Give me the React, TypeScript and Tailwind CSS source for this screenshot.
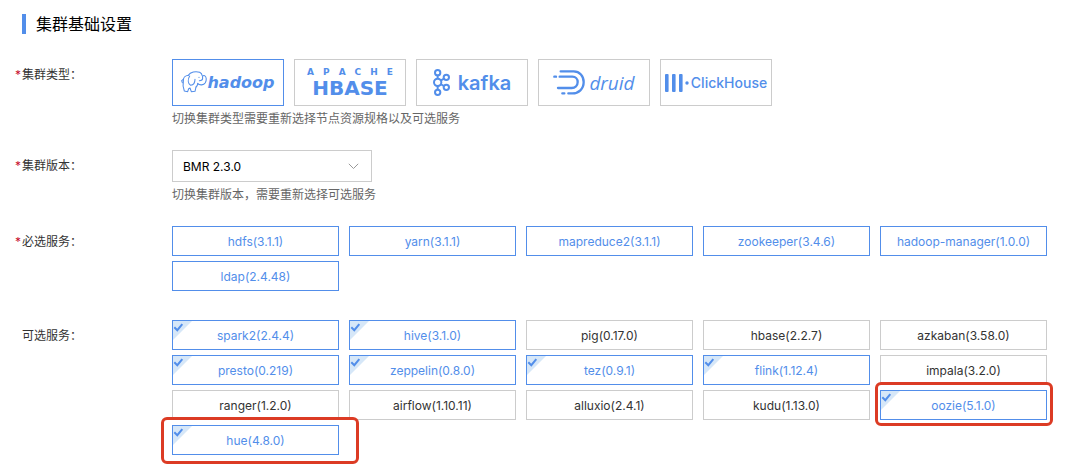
import React, { useState } from 'react';

const FONT = "font-['Inter','Noto_Sans_CJK_SC',sans-serif]";

const HadoopLogo = () => (
  <span className="flex items-center">
    <svg className="w-[26px] h-[24px]" viewBox="0 0 78 72" fill="none" stroke="currentColor" strokeWidth="3.2" strokeLinejoin="round" strokeLinecap="round" aria-hidden="true">
      <path d="M22 13C12 14 6 21 7 31C5 41 6 51 10 60L20 62L23 53L27 51L31 62L42 61L45 48" />
      <path d="M7 25L2 29L4 35" />
      <path d="M22 13C28 3 44 0 56 4C60 6 63 10 64 15" />
      <path d="M26 15C20 25 20 37 29 43C38 42 42 35 42 25" />
      <path d="M45 48C49 46 50 42 50 37C56 44 68 43 73 35C77 28 77 18 71 14C67 12 63 15 65 21C65 26 60 29 55 29" />
      <circle cx="54" cy="19" r="1.8" fill="currentColor" stroke="none" />
    </svg>
    <span className="font-['DejaVu_Sans',sans-serif] text-[16px] leading-6 font-bold italic">hadoop</span>
  </span>
);

const HbaseLogo = () => (
  <span className="flex flex-col items-center font-['DejaVu_Sans',sans-serif] font-bold">
    <span className="text-[9px] leading-[10px]">A&emsp;P&emsp;A&emsp;C&emsp;H&emsp;E</span>
    <span className="text-[20px] leading-[22px]">HBASE</span>
  </span>
);

const KafkaLogo = () => (
  <span className="flex items-center gap-2">
    <svg className="w-[17px] h-[27px]" viewBox="0 0 51 81" fill="none" stroke="currentColor" strokeWidth="6" aria-hidden="true">
      <circle cx="14" cy="11" r="8" />
      <circle cx="14" cy="40" r="11" />
      <circle cx="14" cy="70" r="8" />
      <circle cx="40" cy="25" r="8" />
      <circle cx="40" cy="55" r="8" />
      <path d="M14 19V29M14 51V62M24 34L33 29M24 46L33 51" />
    </svg>
    <span className="text-[20px] leading-6 font-semibold">kafka</span>
  </span>
);

const DruidLogo = () => (
  <span className="flex items-center gap-1">
    <svg className="w-[32px] h-[25px]" viewBox="0 0 96 75" fill="none" stroke="currentColor" strokeWidth="7" strokeLinecap="round" aria-hidden="true">
      <path d="M23 4H62C80 4 92 18 92 36C92 57 77 70 58 70H46" />
      <path d="M20 20H58C68 20 74 27 74 36C74 47 66 54 56 54H15" />
      <path d="M4 20H9M28 70H34" />
    </svg>
    <span className="font-['Open_Sans',sans-serif] text-[19px] leading-6 font-medium italic">druid</span>
  </span>
);

const ClickHouseLogo = () => (
  <span className="flex items-center gap-[2px]">
    <svg className="w-[24px] h-[18px]" viewBox="0 0 24 18" fill="currentColor" aria-hidden="true">
      <rect x="0" y="0" width="3.6" height="18" rx="1" />
      <rect x="7" y="0" width="3.6" height="18" rx="1" />
      <rect x="14" y="0" width="3.6" height="18" rx="1" />
      <circle cx="22" cy="9" r="1.7" />
    </svg>
    <span className="text-[14px] leading-6 font-medium">ClickHouse</span>
  </span>
);

const clusterTypes = [
  { id: 'hadoop', Logo: HadoopLogo },
  { id: 'hbase', Logo: HbaseLogo },
  { id: 'kafka', Logo: KafkaLogo },
  { id: 'druid', Logo: DruidLogo },
  { id: 'clickhouse', Logo: ClickHouseLogo },
];

const requiredServices = [
  'hdfs(3.1.1)', 'yarn(3.1.1)', 'mapreduce2(3.1.1)', 'zookeeper(3.4.6)', 'hadoop-manager(1.0.0)',
  'ldap(2.4.48)',
];

const optionalServices = [
  'spark2(2.4.4)', 'hive(3.1.0)', 'pig(0.17.0)', 'hbase(2.2.7)', 'azkaban(3.58.0)',
  'presto(0.219)', 'zeppelin(0.8.0)', 'tez(0.9.1)', 'flink(1.12.4)', 'impala(3.2.0)',
  'ranger(1.2.0)', 'airflow(1.10.11)', 'alluxio(2.4.1)', 'kudu(1.13.0)', 'oozie(5.1.0)',
  'hue(4.8.0)',
];

// Red frames drawn around the services to point out
const highlights: Record<string, string> = {
  'oozie(5.1.0)': '-left-[6px] -right-[7px] -top-[9px] -bottom-[7px]',
  'hue(4.8.0)': '-left-[12px] -right-[21px] -top-[9px] -bottom-[10px]',
};

interface FieldProps {
  label: string;
  required?: boolean;
  htmlFor?: string;
  children: React.ReactNode;
}

const Field = ({ label, required, htmlFor, children }: FieldProps) => {
  const Label = htmlFor ? 'label' : 'div';
  return (
    <div className="flex">
      <Label htmlFor={htmlFor} className="w-[157px] shrink-0 flex text-xs leading-8 text-[#333]">
        <span className="w-[7px] text-[#c8102e]">{required ? '*' : ''}</span>
        {label}：
      </Label>
      <div className="flex-1 min-w-0">{children}</div>
    </div>
  );
};

const Hint = ({ children }: { children: React.ReactNode }) => (
  <p className="text-xs leading-[26px] text-[#666]">{children}</p>
);

const CheckCorner = () => (
  <svg className="absolute left-0 top-0 w-5 h-5" viewBox="0 0 20 20" fill="none" aria-hidden="true">
    <path d="M0 0H19L0 19Z" fill="#d6e7f8" />
    <path d="M1.3 6.2L4.3 9.2L9.3 3.2" stroke="#528eea" strokeWidth="2" />
  </svg>
);

const App = () => {
  const [clusterType, setClusterType] = useState('hadoop');
  const [selected, setSelected] = useState<string[]>([
    'spark2(2.4.4)', 'hive(3.1.0)', 'presto(0.219)', 'zeppelin(0.8.0)',
    'tez(0.9.1)', 'flink(1.12.4)', 'oozie(5.1.0)', 'hue(4.8.0)',
  ]);

  const toggle = (name: string) => {
    setSelected(prev => (prev.includes(name) ? prev.filter(s => s !== name) : [...prev, name]));
  };

  return (
    <main className={`min-h-screen bg-white pt-[14px] pr-[30px] pb-3 pl-[15px] ${FONT}`}>
      <h1 className="ml-[7px] mb-[25px] border-l-4 border-[#528eea] pl-[10px] text-base leading-5 text-black">
        集群基础设置
      </h1>

      <div className="flex flex-col gap-[18px]">
        <Field label="集群类型" required>
          <div className="flex flex-wrap gap-[10px]">
            {clusterTypes.map(({ id, Logo }) => (
              <button
                key={id}
                type="button"
                aria-label={id}
                aria-pressed={clusterType === id}
                onClick={() => setClusterType(id)}
                className={`w-28 h-[47px] flex items-center justify-center border text-[#528eea] ${clusterType === id ? 'border-[#528eea]' : 'border-[#ccc]'}`}
              >
                <Logo />
              </button>
            ))}
          </div>
          <Hint>切换集群类型需要重新选择节点资源规格以及可选服务</Hint>
        </Field>

        <Field label="集群版本" required htmlFor="version">
          <div className="relative w-[200px]">
            <select id="version" className="w-full h-8 appearance-none border border-[#ccc] bg-white px-[10px] pt-[2px] text-xs text-black">
              <option>BMR 2.3.0</option>
            </select>
            <svg className="absolute right-[13px] top-[13px] w-[11px] h-[7px] pointer-events-none" viewBox="0 0 11 7" fill="none" stroke="#999" aria-hidden="true">
              <path d="M0.8 0.8L5.5 5.5L10.2 0.8" />
            </svg>
          </div>
          <Hint>切换集群版本，需要重新选择可选服务</Hint>
        </Field>

        <Field label="必选服务" required>
          <ul className="grid grid-cols-5 gap-x-[10px] gap-y-[5px] pb-[11px]">
            {requiredServices.map(name => (
              <li key={name} className="h-[30px] flex items-center justify-center border border-[#528eea] pt-[2px] text-xs text-[#528eea]">
                {name}
              </li>
            ))}
          </ul>
        </Field>

        <Field label="可选服务">
          <div className="grid grid-cols-5 gap-x-[10px] gap-y-[5px]">
            {optionalServices.map(name => {
              const checked = selected.includes(name);
              return (
                <label
                  key={name}
                  className={`relative h-[30px] flex items-center justify-center border pt-[2px] text-xs cursor-pointer ${checked ? 'border-[#528eea] text-[#528eea]' : 'border-[#ccc] text-[#333]'}`}
                >
                  <input type="checkbox" className="sr-only" checked={checked} onChange={() => toggle(name)} />
                  {checked && <CheckCorner />}
                  {name}
                  {highlights[name] && (
                    <span className={`absolute z-10 rounded-md border-3 border-[#dc3b24] pointer-events-none ${highlights[name]}`} />
                  )}
                </label>
              );
            })}
          </div>
        </Field>
      </div>
    </main>
  );
};

export default App;
